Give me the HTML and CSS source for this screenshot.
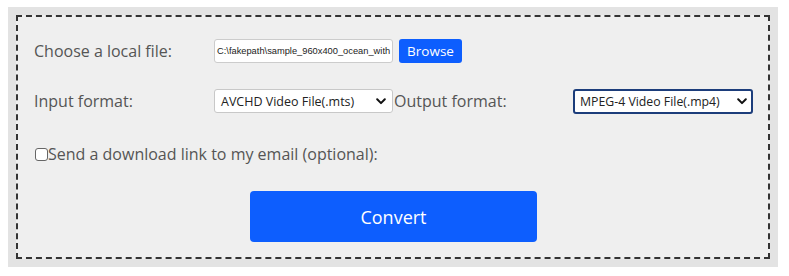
FILE: index.html
```html
<!DOCTYPE html>
<html>
<head>
<meta charset="utf-8">
<link rel="stylesheet" href="styles.css">
</head>
<body>
<div class="outer">
  <form class="panel">
    <div class="row">
      <label class="label">Choose a local file:</label>
      <div class="file">
        <span class="file-name">C:\fakepath\sample_960x400_ocean_with</span>
        <button type="button" class="browse">Browse</button>
      </div>
    </div>
    <div class="row">
      <label class="label">Input format:</label>
      <div class="select">
        <span class="select-text">AVCHD Video File(.mts)</span>
        <svg class="chev" width="10" height="7" viewBox="0 0 10 7"><path d="M1.2 1.3 L5 5.1 L8.8 1.3" fill="none" stroke="#111" stroke-width="2" stroke-linecap="round" stroke-linejoin="round"/></svg>
      </div>
      <label class="label">Output format:</label>
      <div class="select focused">
        <span class="select-text">MPEG-4 Video File(.mp4)</span>
        <svg class="chev" width="10" height="7" viewBox="0 0 10 7"><path d="M1.2 1.3 L5 5.1 L8.8 1.3" fill="none" stroke="#111" stroke-width="2" stroke-linecap="round" stroke-linejoin="round"/></svg>
      </div>
    </div>
    <div class="row check-row">
      <span class="checkbox"></span>
      <span class="label">Send a download link to my email (optional):</span>
    </div>
    <div class="actions">
      <button type="button" class="convert">Convert</button>
    </div>
  </form>
</div>
</body>
</html>
```

FILE: styles.css
```css
html, body {
  margin: 0;
  padding: 0;
  background: #fff;
}
body {
  padding: 7px 8px 0 8px;
  font-family: "Open Sans", "Liberation Sans", sans-serif;
}
.outer {
  width: 754px;
  padding: 8px;
  background: #e3e3e3;
}
.panel {
  border: 2px dashed #333;
  background: #efefef;
  padding: 14px 15px 15px 16px;
  display: flex;
  flex-direction: column;
}
.row {
  display: grid;
  grid-template-columns: 180px 180px 179px 180px;
  align-items: center;
  height: 40px;
  margin-bottom: 10px;
}
.label {
  font-size: 16px;
  color: #555;
  white-space: nowrap;
}
.file {
  grid-column: 2 / 5;
  display: flex;
  align-items: center;
  gap: 6px;
}
.file-name {
  box-sizing: border-box;
  width: 179px;
  height: 24px;
  background: #fff;
  border: 1px solid #ccc;
  border-radius: 3px;
  font-family: "Liberation Sans", Arial, sans-serif;
  font-size: 9.3px;
  color: #222;
  line-height: 22px;
  padding: 0 2px;
  overflow: hidden;
  white-space: nowrap;
}
.browse {
  height: 24px;
  width: 63px;
  background: #0d5efe;
  border: none;
  border-radius: 3px;
  color: #fff;
  font-family: "Open Sans", sans-serif;
  font-size: 13.5px;
  padding: 0;
}
.select {
  position: relative;
  box-sizing: border-box;
  width: 179px;
  height: 24px;
  background: #fff;
  border: 1px solid #c8c8c8;
  border-radius: 3px;
  padding: 0 6px;
  display: flex;
  align-items: center;
  font-size: 12.5px;
  color: #222;
}
.select.focused {
  width: 180px;
  height: 25px;
  border: 2px solid #1c3d7b;
  padding: 0 5px;
  font-size: 12.3px;
}
.chev {
  position: absolute;
  right: 6px;
  top: 8px;
}
.select.focused .chev {
  top: 7px;
  right: 4px;
}
.check-row {
  display: flex;
  align-items: center;
  margin-top: 3px;
  padding-left: 1px;
}
.checkbox {
  box-sizing: border-box;
  width: 13px;
  height: 13px;
  border: 1px solid #666;
  border-radius: 3px;
  background: #fff;
}
.actions {
  display: flex;
  justify-content: center;
  margin-top: 7px;
}
.convert {
  width: 287px;
  height: 51px;
  background: #0d5efe;
  border: none;
  border-radius: 4px;
  color: #fff;
  font-family: "Open Sans", sans-serif;
  font-size: 18px;
  padding: 0;
}
```
